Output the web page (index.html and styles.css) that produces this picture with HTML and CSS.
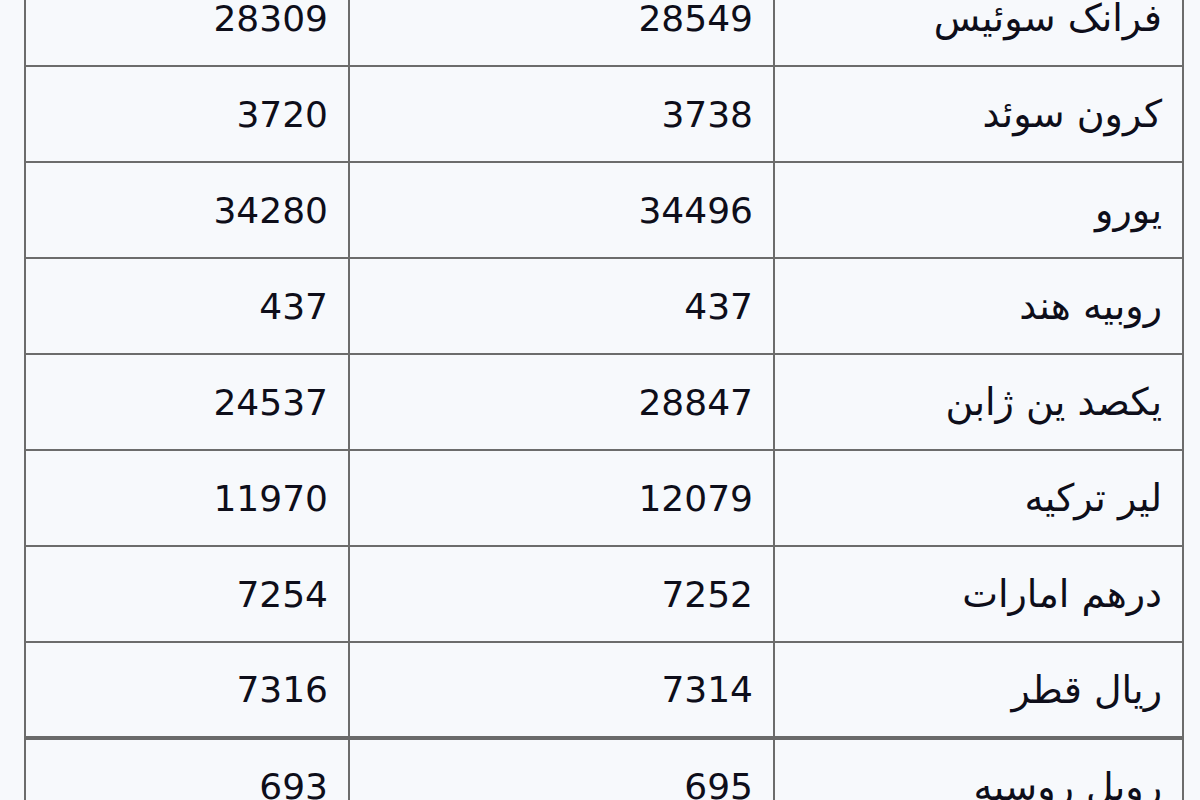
FILE: index.html
```html
<!DOCTYPE html>
<html lang="fa">
<head>
<meta charset="utf-8">
<link rel="stylesheet" href="styles.css">
</head>
<body>
<div class="page">
<table class="rates" dir="rtl">
<tbody>
<tr><td class="name">فرانک سوئیس</td><td class="num">28549</td><td class="num">28309</td></tr>
<tr><td class="name">کرون سوئد</td><td class="num">3738</td><td class="num">3720</td></tr>
<tr><td class="name">یورو</td><td class="num">34496</td><td class="num">34280</td></tr>
<tr><td class="name">روبیه هند</td><td class="num">437</td><td class="num">437</td></tr>
<tr><td class="name">یکصد ین ژابن</td><td class="num">28847</td><td class="num">24537</td></tr>
<tr><td class="name">لیر ترکیه</td><td class="num">12079</td><td class="num">11970</td></tr>
<tr><td class="name">درهم امارات</td><td class="num">7252</td><td class="num">7254</td></tr>
<tr><td class="name">ریال قطر</td><td class="num">7314</td><td class="num">7316</td></tr>
<tr class="group"><td class="name">روبل روسیه</td><td class="num">695</td><td class="num">693</td></tr>
</tbody>
</table>
</div>
</body>
</html>
```
FILE: styles.css
```css
html, body {
  margin: 0;
  padding: 0;
  background: #f7f9fc;
  overflow: hidden;
}
.page {
  padding-left: 24px;
  width: 1158px;
  margin-top: -31px;
}
.rates {
  width: 1158px;
  border-collapse: collapse;
  table-layout: fixed;
  font-family: "DejaVu Sans", Tahoma, sans-serif;
  font-size: 36px;
  color: #0e0e1a;
}
.rates td {
  border: 2px solid #6c6c6c;
  padding: 0 20px;
  text-align: right;
  vertical-align: middle;
  box-sizing: border-box;
  height: 96px;
}
.rates td.name { width: 409px; font-size: 38px; }
.rates td.num:nth-child(2) { width: 425px; }
.rates td.num:nth-child(3) { width: 324px; }
.rates tr.group td { border-top: 4px solid #6a6a6a; }
```
